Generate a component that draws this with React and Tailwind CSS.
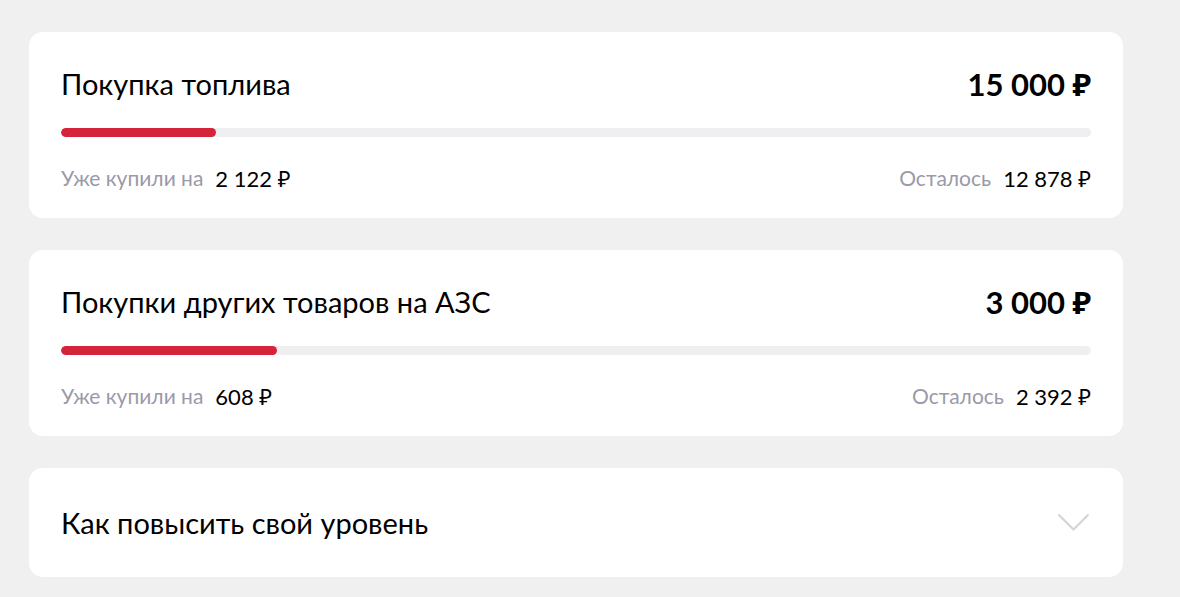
import React from "react";

const font = { fontFamily: "Lato, 'Noto Sans', sans-serif" };

const LimitCard = ({title, total, spent, left, percent}) => (
    <div className="bg-white rounded-[14px] px-[32px] pt-[36px] pb-[27px]">
        <div className="flex justify-between items-center h-[32px]">
            <span className="text-[29px] text-black">{title}</span>
            <span className="text-[31px] font-bold text-black">{total}</span>
        </div>
        <div className="mt-[28px] h-[9px] rounded-full bg-[#efeff2] overflow-hidden">
            <div className="h-full rounded-full bg-[#d4233b]" style={{width: percent}}/>
        </div>
        <div className="mt-[28px] flex justify-between items-center h-[26px]">
            <div className="flex items-center gap-[12px]">
                <span className="text-[21px] text-[#9a9aa8]">Уже купили на</span>
                <span className="text-[22px] text-black">{spent}</span>
            </div>
            <div className="flex items-center gap-[12px]">
                <span className="text-[21px] text-[#9a9aa8]">Осталось</span>
                <span className="text-[22px] text-black">{left}</span>
            </div>
        </div>
    </div>
);

export default function App() {
    return (
        <div className="min-h-[597px] bg-[#f0f0f0] pl-[29px] pr-[57px] pt-[32px] pb-[20px]" style={font}>
            <div className="flex flex-col gap-[32px]">
                <LimitCard title="Покупка топлива" total="15 000 ₽" spent="2 122 ₽" left="12 878 ₽" percent="15%"/>
                <LimitCard title="Покупки других товаров на АЗС" total="3 000 ₽" spent="608 ₽" left="2 392 ₽" percent="21%"/>
                <div className="bg-white rounded-[14px] px-[32px] h-[109px] flex items-center justify-between">
                    <span className="text-[29px] text-black">Как повысить свой уровень</span>
                    <svg className="mr-[1px]" width="33" height="19" viewBox="0 0 33 19" fill="none">
                        <path d="M1.5 1.5 L16.5 16.5 L31.5 1.5" stroke="#d4d4dc" strokeWidth="2.2"/>
                    </svg>
                </div>
            </div>
        </div>
    );
}
